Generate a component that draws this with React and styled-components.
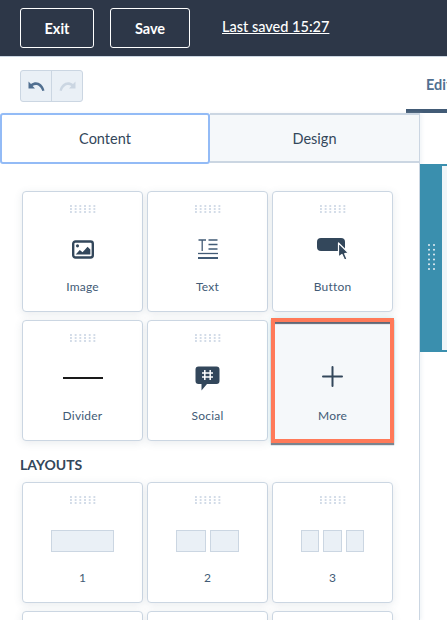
import React from "react";
import styled, { createGlobalStyle } from "styled-components";

const Global = createGlobalStyle`
  html, body { margin: 0; padding: 0; background: #fff; }
  body { width: 447px; height: 620px; overflow: hidden; font-family: Lato, "Open Sans", sans-serif; color: #33475b; }
  * { box-sizing: border-box; }
`;

const Page = styled.div`
  width: 447px;
  height: 620px;
  overflow: hidden;
  display: flex;
  flex-direction: column;
`;
const TopBar = styled.header`
  height: 57px;
  flex: none;
  background: #2d3748;
  border-bottom: 1px solid #cbd6e2;
  padding: 8px 0 8px 20px;
  display: flex;
  align-items: flex-start;
`;
const BarButton = styled.button`
  width: ${p => p.$w}px;
  height: 40px;
  margin-right: 16px;
  background: transparent;
  border: 1px solid #fff;
  border-radius: 3px;
  color: #fff;
  font: 700 14.5px Lato, sans-serif;
  padding: 0;
`;
const Saved = styled.a`
  margin-left: 16px;
  line-height: 38px;
  color: #fff;
  font-size: 14.5px;
  font-weight: 500;
  text-decoration: underline;
  white-space: nowrap;
`;
const Toolbar = styled.div`
  height: 56px;
  flex: none;
  display: flex;
  align-items: flex-start;
  justify-content: space-between;
  padding-left: 20px;
  padding-top: 13px;
`;
const UndoGroup = styled.div`
  display: flex;
  width: 63px;
  height: 32px;
  border: 1px solid #cbd6e2;
  border-radius: 3px;
  background: #eaf0f6;
  overflow: hidden;
`;
const UndoButton = styled.span`
  flex: 1;
  display: flex;
  align-items: center;
  justify-content: center;
  & + & { border-left: 1px solid #cbd6e2; }
`;
const EditTab = styled.div`
  width: 41px;
  height: 43px;
  padding: 2px 0 0 20px;
  border-bottom: 4px solid #425b76;
  font-weight: 700;
  font-size: 14.5px;
  line-height: 26px;
  color: #516f90;
  overflow: hidden;
  white-space: nowrap;
`;
const Body = styled.div`
  flex: 1;
  min-height: 0;
  display: flex;
`;
const Sidebar = styled.aside`
  width: 420px;
  flex: none;
  border-right: 1px solid #cbd6e2;
  box-shadow: 2px 0 3px rgba(203, 214, 226, .25);
`;
const Tabs = styled.div`
  display: flex;
  height: 51px;
`;
const Tab = styled.div`
  flex: none;
  width: ${p => (p.$active ? 210 : 209)}px;
  display: flex;
  align-items: center;
  justify-content: center;
  font-size: 14.5px;
  color: #33475b;
  ${p => p.$active
    ? "background:#fff;border:2px solid #93bbf6;border-radius:3px;"
    : "background:#f5f8fa;border:1px solid #cbd6e2;border-width:2px 0 2px 0;margin-bottom:1px;"}
`;
const Palette = styled.div`
  padding: 27px 0 0 22px;
`;
const Grid = styled.div`
  display: grid;
  grid-template-columns: repeat(3, 121px);
  grid-auto-rows: 121px;
  gap: 8px 4px;
`;
const Card = styled.div`
  position: relative;
  background: #fff;
  border: 1px solid #cbd6e2;
  border-radius: 4px;
  box-shadow: 0 2px 8px rgba(66, 91, 118, 0.12);
  display: flex;
  flex-direction: column;
  align-items: center;
`;
const MoreCard = styled(Card)`
  background: #f5f8fa;
  border: 4px solid #ff7a59;
  border-radius: 0;
  margin: -2px -1px -2px -1px;
  box-shadow: inset 0 3px 1px -1px rgba(45, 55, 72, .75), 0 2px 1px rgba(45, 55, 72, .6), 0 0 6px rgba(0, 164, 189, .2);
`;
const Dots = styled.div`
  margin-top: 13px;
  width: 26px;
  height: 8px;
  flex: none;
  background-image: radial-gradient(circle at 1px 1px, #d3dce8 .8px, transparent 1px);
  background-size: 4.7px 3px;
`;
const DotsGap = styled.div`
  height: 18px;
  flex: none;
`;
const IconBox = styled.div`
  height: 36px;
  margin-top: 18px;
  display: flex;
  align-items: center;
  justify-content: center;
  flex: none;
`;
const Label = styled.div`
  margin-top: 12px;
  font-size: 12px;
  line-height: 16px;
  color: #425b76;
  letter-spacing: .2px;
`;
const MoreLabel = styled(Label)`
  margin-top: 14px;
`;
const Heading = styled.h3`
  margin: 15px 0 8px -2px;
  font-size: 14px;
  line-height: 18px;
  font-weight: 700;
  color: #33475b;
`;
const Boxes = styled.div`
  display: flex;
  gap: ${p => p.$gap}px;
  margin-top: 2px;
`;
const Box = styled.div`
  width: ${p => p.$w}px;
  height: 22px;
  background: #eaf0f6;
  border: 1px solid #cbd6e2;
`;
const Canvas = styled.main`
  flex: 1;
  min-width: 0;
  padding-top: 51px;
`;
const Section = styled.div`
  height: 188px;
  background: #3a8fae;
  padding: 2px 0 2px 22px;
  position: relative;
  display: flex;
`;
const SectionInner = styled.div`
  flex: 1;
  background: #f0f5f8;
`;
const Grip = styled.svg`
  position: absolute;
  left: 8px;
  top: 80px;
`;
const Divider = styled.div`
  width: 40px;
  height: 2px;
  background: #1a1a1a;
`;

const ImageIcon = () => (
  <svg width="22" height="19" viewBox="0 0 24 20" fill="none">
    <rect x="1.3" y="1.3" width="21.4" height="17.4" rx="2.5" stroke="#33475b" strokeWidth="2.6" />
    <circle cx="6" cy="6" r="1.7" fill="#33475b" />
    <path d="M4 15.5 L8.5 10.5 L11.5 13 L17 7 L20 10 V15.5 Z" fill="#33475b" />
  </svg>
);
const TextIcon = () => (
  <svg width="20" height="20" viewBox="0 0 20 20" fill="none" stroke="#425b76" strokeWidth="1.3">
    <path d="M0.5 1 H8 M4.2 1 V12" />
    <path d="M10.5 1 H19.5 M10.5 5.5 H19.5 M10.5 10 H19.5" />
    <path d="M0 14.5 H20" />
    <path d="M0 19 H20" strokeWidth="2" />
  </svg>
);
const ButtonIcon = () => (
  <svg width="32" height="22" viewBox="0 0 32 22">
    <rect x="0" y="0" width="28" height="13" rx="4" fill="#33475b" />
    <path d="M21.5 5 V19 L25 16.5 L27.5 22 L30 21 L27.7 15.7 L31.8 15.2 Z" fill="#33475b" stroke="#fff" strokeWidth="1.2" strokeLinejoin="round" />
  </svg>
);
const SocialIcon = () => (
  <svg width="25" height="25" viewBox="0 0 25 25">
    <path d="M3.5 0.5 H21.5 A3 3 0 0 1 24.5 3.5 V15 A3 3 0 0 1 21.5 18 H12 L6.5 24.5 V18 H3.5 A3 3 0 0 1 0.5 15 V3.5 A3 3 0 0 1 3.5 0.5 Z" fill="#33475b" />
    <path d="M9.8 4 V14 M15.2 4 V14 M7 7 H18 M7 11 H18" stroke="#fff" strokeWidth="1.5" />
  </svg>
);
const PlusIcon = () => (
  <svg width="21" height="21" viewBox="0 0 21 21">
    <path d="M10.5 1 V20 M1 10.5 H20" stroke="#33475b" strokeWidth="2" strokeLinecap="round" />
  </svg>
);

const Item = ({ icon, label }) => (
  <Card>
    <Dots />
    <IconBox>{icon}</IconBox>
    <Label>{label}</Label>
  </Card>
);

export default function App() {
  return (
    <Page>
      <Global />
      <TopBar>
        <BarButton $w={74}>Exit</BarButton>
        <BarButton $w={80}>Save</BarButton>
        <Saved>Last saved 15:27</Saved>
      </TopBar>
      <Toolbar>
        <UndoGroup>
          <UndoButton>
            <svg width="17" height="11" viewBox="0 0 17 11"><path d="M0.5 0.5 L0.5 7.5 L7 7.5 L4.6 5.1 C7.5 3 12 3.5 14.3 10 L16.5 9.5 C14.3 1.5 8 -0.5 3 3 Z" fill="#516f90" /></svg>
          </UndoButton>
          <UndoButton>
            <svg width="17" height="11" viewBox="0 0 17 11"><path d="M16.5 0.5 L16.5 7.5 L10 7.5 L12.4 5.1 C9.5 3 5 3.5 2.7 10 L0.5 9.5 C2.7 1.5 9 -0.5 14 3 Z" fill="#cbd6e2" /></svg>
          </UndoButton>
        </UndoGroup>
        <EditTab>Edit</EditTab>
      </Toolbar>
      <Body>
        <Sidebar>
          <Tabs>
            <Tab $active>Content</Tab>
            <Tab>Design</Tab>
          </Tabs>
          <Palette>
            <Grid>
              <Item icon={<ImageIcon />} label="Image" />
              <Item icon={<TextIcon />} label="Text" />
              <Item icon={<ButtonIcon />} label="Button" />
              <Item icon={<Divider />} label="Divider" />
              <Item icon={<SocialIcon />} label="Social" />
              <MoreCard>
                <DotsGap />
                <IconBox><PlusIcon /></IconBox>
                <MoreLabel>More</MoreLabel>
              </MoreCard>
            </Grid>
            <Heading>LAYOUTS</Heading>
            <Grid>
              <Item icon={<Boxes $gap={4}><Box $w={63} /></Boxes>} label="1" />
              <Item icon={<Boxes $gap={4}><Box $w={30} /><Box $w={29} /></Boxes>} label="2" />
              <Item icon={<Boxes $gap={4}><Box $w={18} /><Box $w={19} /><Box $w={18} /></Boxes>} label="3" />
              <Item icon={<span />} label="" />
              <Item icon={<span />} label="" />
              <Item icon={<span />} label="" />
            </Grid>
          </Palette>
        </Sidebar>
        <Canvas>
          <Section>
            <Grip width="8" height="28" viewBox="0 0 8 28" fill="#e6eef3">
              {[0, 1, 2, 3, 4, 5].flatMap(r => [0, 1].map(c => (
                <circle key={`${r}-${c}`} cx={1 + c * 5} cy={1 + r * 4.8} r="1" />
              )))}
            </Grip>
            <SectionInner />
          </Section>
        </Canvas>
      </Body>
    </Page>
  );
}
